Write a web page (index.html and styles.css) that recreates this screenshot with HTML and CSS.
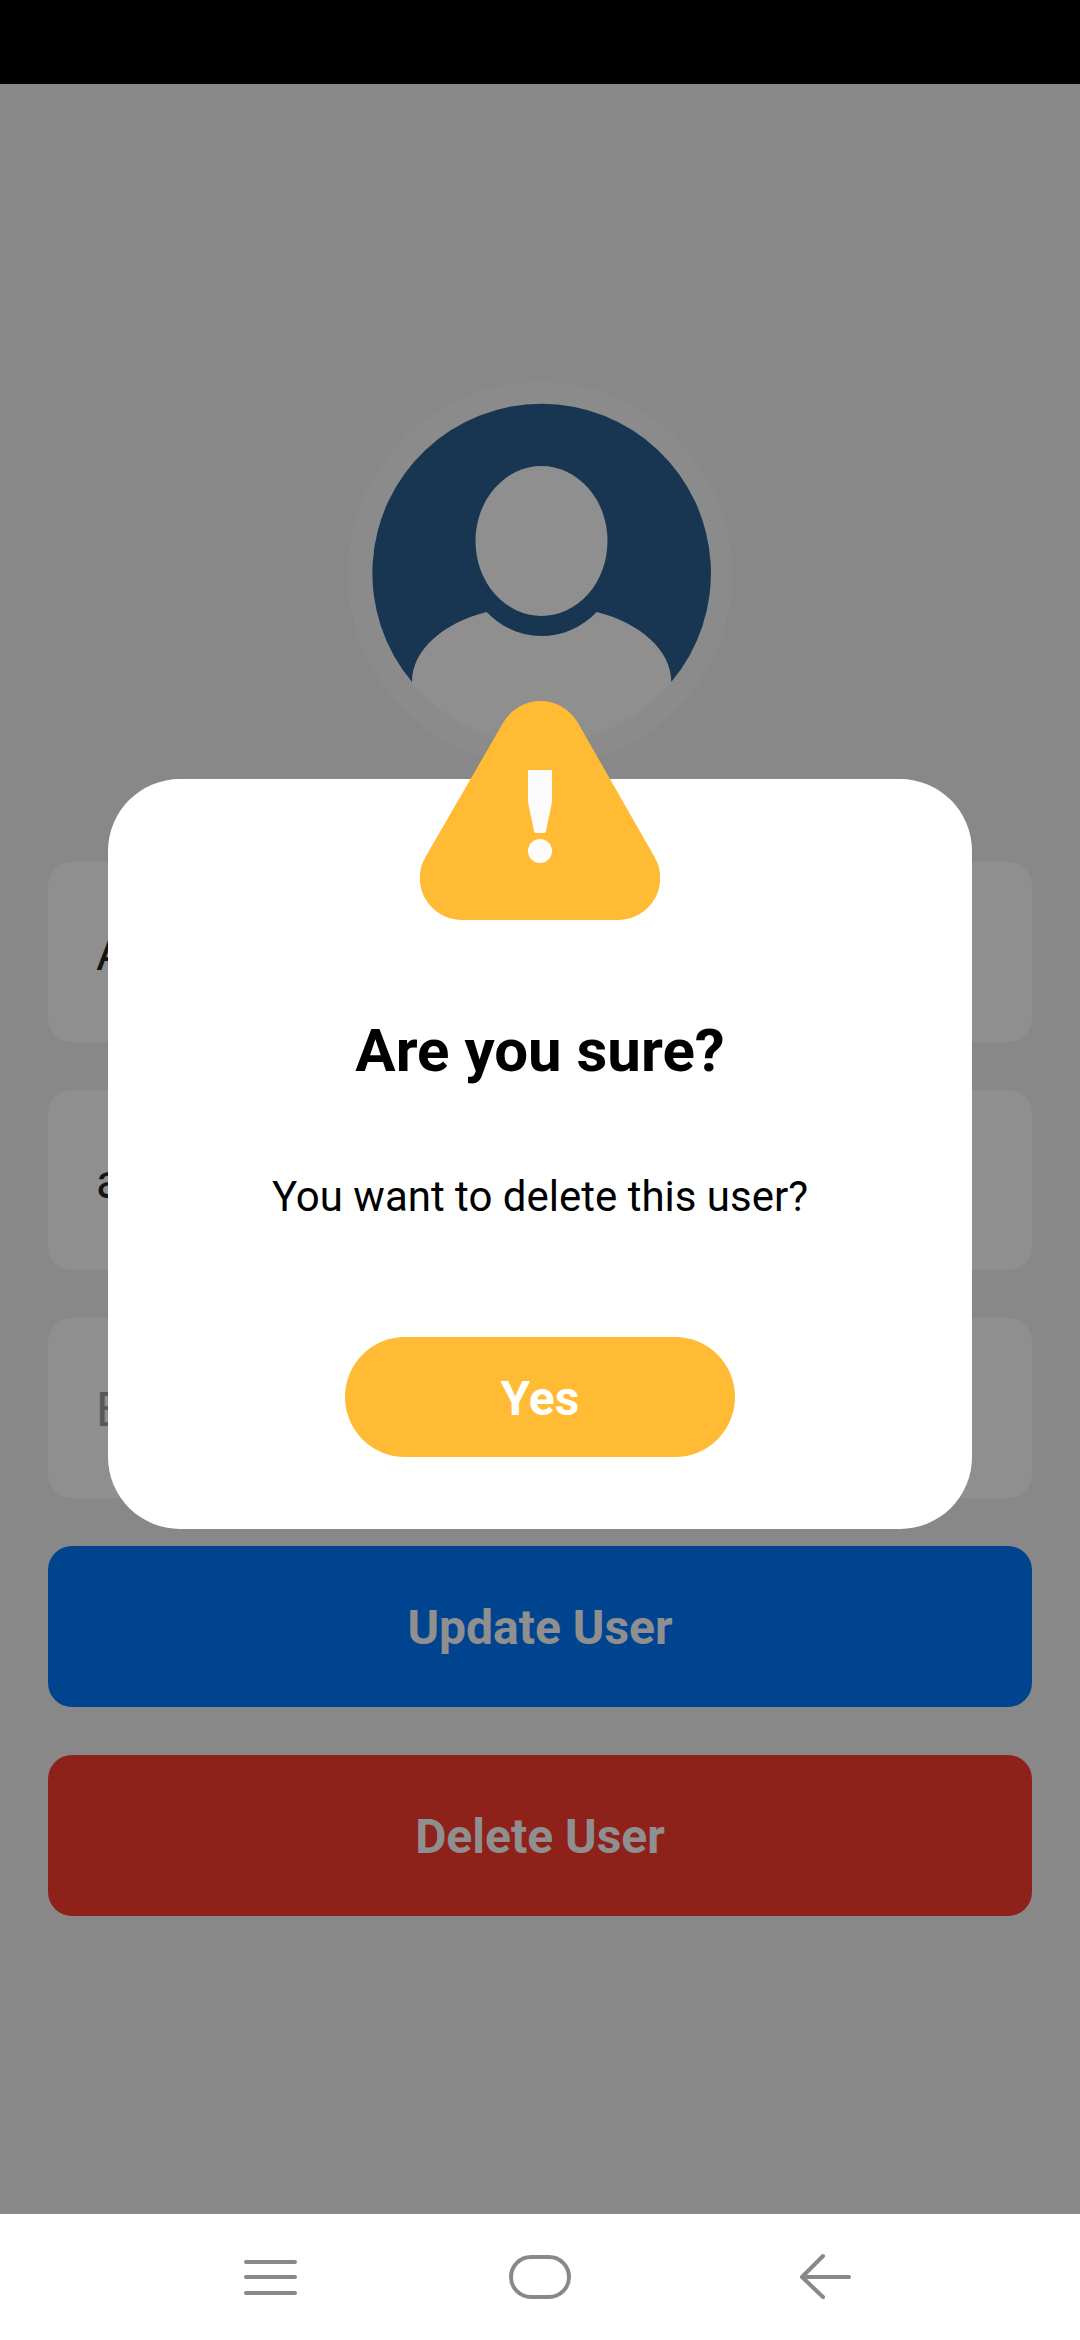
FILE: index.html
```html
<!DOCTYPE html>
<html lang="en">
<head>
  <meta charset="utf-8">
  <meta name="viewport" content="width=device-width, initial-scale=1">
  <title>Edit User</title>
  <link rel="stylesheet" href="styles.css">
</head>
<body>
  <div class="status-bar"></div>

  <div class="screen">
    <main class="profile">
      <svg class="avatar" viewBox="0 0 384 384" role="img" aria-label="User avatar">
        <circle cx="192" cy="192" r="192" fill="#f8f8f8"/>
        <circle cx="193.5" cy="191.5" r="169.5" fill="#fff"/>
        <path fill="#2b6191" d="M64 300A169.300 169.300 0 1 1 323.300 300C323.300 268 292 241 248.700 230C233 246 214 254 193.500 254C173 254 154 246 138.700 230C95 241 64 268 64 300Z"/>
        <ellipse cx="193.500" cy="159" rx="66" ry="75" fill="#fff"/>
      </svg>
      <form class="form">
        <input class="field" type="text" aria-label="Name" value="A">
        <input class="field" type="text" aria-label="Username" value="a">
        <input class="field" type="text" aria-label="Email" placeholder="E">
        <button class="action action-update" type="button">Update User</button>
        <button class="action action-delete" type="button">Delete User</button>
      </form>
    </main>

    <div class="scrim">
      <section class="dialog" role="alertdialog" aria-modal="true" aria-labelledby="dialog-title" aria-describedby="dialog-text">
        <svg class="dialog-icon" viewBox="0 0 240 219" aria-hidden="true">
          <path fill="#ffbb34" d="M83 22A43 43 0 0 1 158 22L234 155A42 42 0 0 1 198 219H42A42 42 0 0 1 6 155Z"/>
          <path fill="#fcfcfc" d="M108 69H132V98Q132 102 131 106L126 130Q125.500 132 124 132H116Q114.500 132 114 130L109 106Q108 102 108 98Z"/>
          <circle cx="120" cy="150" r="12" fill="#fcfcfc"/>
        </svg>
        <h1 class="dialog-title" id="dialog-title">Are you sure?</h1>
        <p class="dialog-text" id="dialog-text">You want to delete this user?</p>
        <button class="confirm" type="button">Yes</button>
      </section>
    </div>
  </div>

  <nav class="system-nav" aria-label="System">
    <button class="nav-button" type="button" aria-label="Recent apps">
      <svg class="nav-icon" viewBox="0 0 90 90"><path d="M21 30H70M21 45H70M21 61H70"/></svg>
    </button>
    <button class="nav-button" type="button" aria-label="Home">
      <svg class="nav-icon" viewBox="0 0 90 90"><rect x="16" y="25" width="58" height="40" rx="20"/></svg>
    </button>
    <button class="nav-button" type="button" aria-label="Back">
      <svg class="nav-icon" viewBox="0 0 90 90"><path d="M84 45H37M58 24L37 45L58 65"/></svg>
    </button>
  </nav>
</body>
</html>
```
FILE: styles.css
```css
* {
  box-sizing: border-box;
}

body {
  margin: 0;
  min-height: 100vh;
  display: flex;
  flex-direction: column;
  background: #fff;
  font-family: Roboto, "Liberation Sans", sans-serif;
}

button,
input {
  margin: 0;
  border: 0;
  font-family: inherit;
}

.status-bar {
  height: 84px;
  background: #000;
}

.screen {
  position: relative;
  flex: 1;
  display: flex;
  flex-direction: column;
  background: #f3f3f3;
}

/* Profile form */
.profile {
  flex: 1;
  display: flex;
  flex-direction: column;
  justify-content: center;
  gap: 96px;
  padding: 48px;
}

.avatar {
  display: block;
  width: 384px;
  height: 384px;
  align-self: center;
}

.form {
  display: flex;
  flex-direction: column;
  gap: 48px;
}

.field {
  width: 100%;
  height: 180px;
  padding: 2px 48px 0;
  border-radius: 24px;
  background: #fff;
  color: #242424;
  font-size: 48px;
}

.field::placeholder {
  color: #9d9d9d;
  opacity: 1;
}

.action {
  padding: 53px 48px 51px;
  border-radius: 24px;
  color: #fff;
  font-size: 48px;
  font-weight: 700;
  line-height: 57px;
}

.action-update {
  background: #007aff;
}

.action-delete {
  background: #ff3b30;
}

/* Confirmation dialog */
.scrim {
  position: absolute;
  inset: 0;
  display: flex;
  align-items: center;
  justify-content: center;
  padding-top: 10px;
  background: rgba(0, 0, 0, 0.44);
}

.dialog {
  width: 80%;
  display: flex;
  flex-direction: column;
  align-items: center;
  padding-bottom: 72px;
  border-radius: 72px;
  background: #fff;
  color: #000;
  text-align: center;
}

.dialog-icon {
  width: 240px;
  height: 219px;
  margin-top: -78px;
}

.dialog-title {
  margin: 95px 0 86px;
  font-size: 60px;
  font-weight: 700;
  line-height: 72px;
}

.dialog-text {
  margin: 0 0 116px;
  font-size: 42px;
  line-height: 48px;
}

.confirm {
  width: 390px;
  height: 120px;
  padding: 2px 0 0;
  border-radius: 60px;
  background: #ffbb34;
  color: #fff;
  font-size: 48px;
  font-weight: 700;
}

/* System navigation */
.system-nav {
  display: grid;
  grid-template-columns: repeat(3, 1fr);
  padding: 18px 12.5%;
  background: #fff;
}

.nav-button {
  display: flex;
  justify-content: center;
  padding: 0;
  background: none;
}

.nav-icon {
  width: 90px;
  height: 90px;
  fill: none;
  stroke: #888;
  stroke-width: 4;
  stroke-linecap: round;
  stroke-linejoin: round;
}
```
